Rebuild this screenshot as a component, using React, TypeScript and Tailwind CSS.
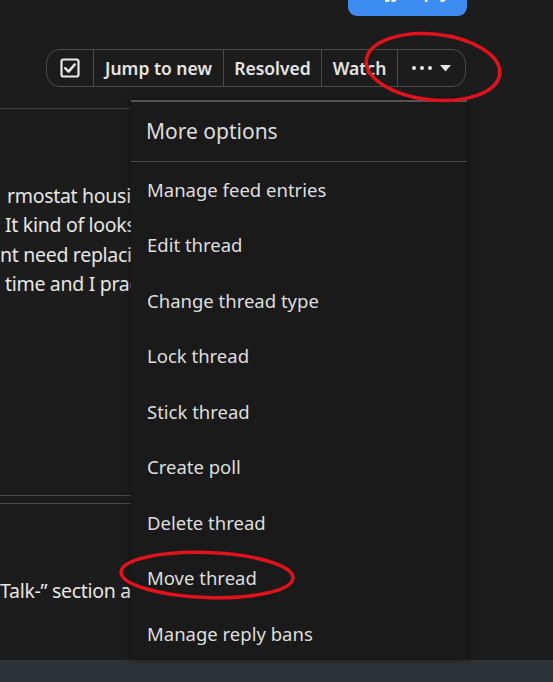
import React from "react";

const menuItems = [
  "Manage feed entries",
  "Edit thread",
  "Change thread type",
  "Lock thread",
  "Stick thread",
  "Create poll",
  "Delete thread",
  "Move thread",
  "Manage reply bans",
];

function CheckIcon() {
  return (
    <svg width="20" height="20" viewBox="0 0 20 20" fill="none">
      <rect x="1.5" y="1.5" width="17" height="17" rx="2" stroke="#e8e8e8" strokeWidth="2.2" />
      <path d="M5.2 10.2 L8.6 13.6 L14.8 6.4" stroke="#e8e8e8" strokeWidth="2.4" strokeLinecap="round" strokeLinejoin="round" />
    </svg>
  );
}

export default function App() {
  return (
    <div
      className="relative w-[553px] h-[682px] overflow-hidden bg-[#1c1c1c] text-[#e2e2e2]"
      style={{ fontFamily: "'Noto Sans', 'Open Sans', sans-serif" }}
    >
      <div className="h-[660px] flex flex-col">
        {/* blue button peeking at top */}
        <div className="flex justify-end pr-[86px]">
          <div className="w-[119px] h-[16px] rounded-b-[9px] bg-[#3d8cf2] overflow-hidden relative">
            <span className="absolute left-[38px] top-[-20px] text-[18px] font-semibold text-white leading-[22px]">
              jy reply
            </span>
          </div>
        </div>

        {/* toolbar */}
        <div className="flex justify-end pr-[87px] mt-[33px]">
          <div className="flex h-[38px] rounded-[14px] border border-[#4b4b4b] text-[17.5px] font-semibold text-[#e4e4e4]">
            <div className="w-[46px] flex items-center justify-center">
              <CheckIcon />
            </div>
            <div className="w-[130px] flex items-center justify-center border-l border-[#4b4b4b]">Jump to new</div>
            <div className="w-[98px] flex items-center justify-center border-l border-[#4b4b4b]">Resolved</div>
            <div className="w-[76px] flex items-center justify-center border-l border-[#4b4b4b]">Watch</div>
            <div className="w-[68px] flex items-center justify-center gap-[8px] border-l border-[#4b4b4b]">
              <span className="flex gap-[3.5px]">
                <span className="w-[4.5px] h-[4.5px] rounded-full bg-[#e4e4e4]" />
                <span className="w-[4.5px] h-[4.5px] rounded-full bg-[#e4e4e4]" />
                <span className="w-[4.5px] h-[4.5px] rounded-full bg-[#e4e4e4]" />
              </span>
              <svg width="11" height="7" viewBox="0 0 11 7">
                <path d="M0 0 H11 L5.5 6.5 Z" fill="#e4e4e4" />
              </svg>
            </div>
          </div>
        </div>

        {/* left content, partly covered by menu */}
        <div className="w-[300px] overflow-hidden mt-[21px]">
          <div className="h-px bg-[#3f3f3f]" />
          <div className="mt-[72px] text-[19.5px] tracking-[-0.3px] leading-[29.3px] text-[#e6e6e6] whitespace-nowrap">
            <div className="pl-[7px]">rmostat housing and the gasket</div>
            <div className="pl-[5px]">It kind of looks like it has</div>
            <div className="pl-0">nt need replacing anyway.</div>
            <div className="pl-[5px]">time and I practically</div>
          </div>
          <div className="mt-[197px] h-px bg-[#4a4a4a]" />
          <div className="mt-[7px] h-px bg-[#4a4a4a]" />
          <div className="mt-[72px] text-[19.5px] tracking-[-0.3px] leading-[29px] text-[#e6e6e6] whitespace-nowrap ml-[-7px]">
            “Talk-” section and post
          </div>
        </div>
      </div>

      {/* footer bar */}
      <div className="h-[22px] bg-[#2e3337]" />

      {/* dropdown menu */}
      <div className="absolute left-[131px] top-[100px] w-[336px] h-[560px] bg-[#1a1a1a] border-t-[2px] border-[#545454] shadow-[0_0_6px_rgba(0,0,0,0.45)] text-[#dedede]">
        <div className="h-[59px] flex items-center pl-[15px] text-[21px] text-[#dcdcdc]">More options</div>
        <div className="h-px bg-[#4a4a4a]" />
        <div className="flex flex-col">
          {menuItems.map((item) => (
            <div key={item} className="h-[55.5px] flex items-center pl-[16px] text-[18.5px]">
              {item}
            </div>
          ))}
        </div>
      </div>

      {/* red annotation ellipses */}
      <svg className="absolute left-0 top-0 pointer-events-none" width="553" height="682" viewBox="0 0 553 682">
        <ellipse cx="433" cy="67" rx="67" ry="33" fill="none" stroke="#e0121c" strokeWidth="3.5" transform="rotate(6 433 67)" />
        <ellipse cx="207" cy="575" rx="86" ry="22.5" fill="none" stroke="#e0121c" strokeWidth="3.5" transform="rotate(2 207 575)" />
      </svg>
    </div>
  );
}
